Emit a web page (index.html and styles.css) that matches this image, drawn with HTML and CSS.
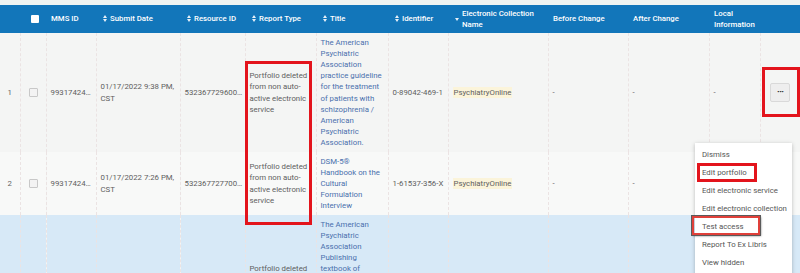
FILE: index.html
```html
<!DOCTYPE html>
<html lang="en">
  <head>
    <meta charset="UTF-8" />
    <title>Electronic Resource Reports</title>
    <link rel="stylesheet" href="styles.css">
  </head>

  <body>
    <div class="topband"></div>
    <div class="wrap">
      <table class="grid">
        <colgroup>
          <col style="width: 20px" />
          <col style="width: 26px" />
          <col style="width: 50px" />
          <col style="width: 84px" />
          <col style="width: 65px" />
          <col style="width: 71px" />
          <col style="width: 72px" />
          <col style="width: 60px" />
          <col style="width: 100px" />
          <col style="width: 80px" />
          <col style="width: 81px" />
          <col style="width: 51px" />
          <col style="width: 40px" />
        </colgroup>
        <thead>
          <tr>
            <th></th>
            <th class="center"><span class="hcheck"></span></th>
            <th><div class="th-in">MMS ID</div></th>
            <th><div class="th-in sortable"><svg class="sort" width="4" height="7" viewBox="0 0 4 7"><path d="M2 0L4 3H0zM0 4H4L2 7z" fill="currentColor"/></svg>Submit Date</div></th>
            <th><div class="th-in sortable"><svg class="sort" width="4" height="7" viewBox="0 0 4 7"><path d="M2 0L4 3H0zM0 4H4L2 7z" fill="currentColor"/></svg>Resource ID</div></th>
            <th><div class="th-in sortable"><svg class="sort" width="4" height="7" viewBox="0 0 4 7"><path d="M2 0L4 3H0zM0 4H4L2 7z" fill="currentColor"/></svg>Report Type</div></th>
            <th><div class="th-in sortable"><svg class="sort" width="4" height="7" viewBox="0 0 4 7"><path d="M2 0L4 3H0zM0 4H4L2 7z" fill="currentColor"/></svg>Title</div></th>
            <th><div class="th-in sortable"><svg class="sort" width="4" height="7" viewBox="0 0 4 7"><path d="M2 0L4 3H0zM0 4H4L2 7z" fill="currentColor"/></svg>Identifier</div></th>
            <th><div class="th-in sortable"><svg class="sort" width="4" height="3" viewBox="0 0 4 3"><path d="M0 0H4L2 3z" fill="currentColor"/></svg><span>Electronic Collection Name</span></div></th>
            <th><div class="th-in">Before Change</div></th>
            <th><div class="th-in">After Change</div></th>
            <th><div class="th-in">Local Information</div></th>
            <th></th>
          </tr>
        </thead>
        <tbody>
          <tr class="row-a">
            <td class="num">1</td>
            <td class="center"><span class="check"></span></td>
            <td class="clip">9931742430004521</td>
            <td>01/17/2022 9:38 PM, CST</td>
            <td class="clip">532367729600045</td>
            <td>Portfolio deleted from non auto-active electronic service</td>
            <td><a class="title" href="#">The American Psychiatric Association practice guideline for the treatment of patients with schizophrenia / American Psychiatric Association.</a></td>
            <td class="nowrap">0-89042-469-1</td>
            <td><span class="mark">PsychiatryOnline</span></td>
            <td>-</td>
            <td>-</td>
            <td>-</td>
            <td class="center"><button class="more">&middot;&middot;&middot;</button></td>
          </tr>
          <tr class="row-b">
            <td class="num">2</td>
            <td class="center"><span class="check"></span></td>
            <td class="clip">9931742420004521</td>
            <td>01/17/2022 7:26 PM, CST</td>
            <td class="clip">532367727700045</td>
            <td>Portfolio deleted from non auto-active electronic service</td>
            <td><a class="title" href="#">DSM-5&reg; Handbook on the Cultural Formulation Interview</a></td>
            <td class="nowrap">1-61537-356-X</td>
            <td><span class="mark">PsychiatryOnline</span></td>
            <td>-</td>
            <td>-</td>
            <td></td>
            <td></td>
          </tr>
          <tr class="row-sel">
            <td class="num">3</td>
            <td class="center"><span class="check"></span></td>
            <td class="clip">9931742410004521</td>
            <td>01/17/2022 7:26 PM, CST</td>
            <td class="clip">532367727500045</td>
            <td>Portfolio deleted from non auto-active electronic service</td>
            <td><a class="title" href="#">The American Psychiatric Association Publishing textbook of geriatric psychiatry / edited by Dan G. Blazer, David C. Steffens, Mugdha E. Thakur, sixth edition.</a></td>
            <td class="nowrap">1-61537-150-8</td>
            <td><span class="mark">PsychiatryOnline</span></td>
            <td>-</td>
            <td>-</td>
            <td>-</td>
            <td></td>
          </tr>
        </tbody>
      </table>

      <!-- annotation boxes -->
      <div class="callout callout-type"></div>
      <div class="callout callout-more"></div>

      <ul class="menu">
        <li>Dismiss</li>
        <li>Edit portfolio</li>
        <li>Edit electronic service</li>
        <li>Edit electronic collection</li>
        <li>Test access</li>
        <li>Report To Ex Libris</li>
        <li>View hidden</li>
        <li>Delete</li>
        <div class="callout callout-edit"></div>
        <div class="callout callout-test"></div>
      </ul>
    </div>
  </body>
</html>
```

FILE: styles.css
```css
body {
  margin: 0;
  background-color: #f3f5f4;
  font-family: Roboto, "Liberation Sans", sans-serif;
  font-size: 7.8px;
  line-height: 11.2px;
  color: #5e5e5e;
  overflow: hidden;
}

.topband {
  height: 5px;
  background-color: #eff4f2;
}

.wrap {
  position: relative;
}

.grid {
  width: 800px;
  table-layout: fixed;
  border-collapse: collapse;
}

.grid thead tr {
  height: 28px;
  background-color: #1276ba;
}

.grid th {
  padding: 0 2px 0 5px;
  color: #fff;
  font-weight: 500;
  text-align: left;
  vertical-align: middle;
}

.th-in {
  display: flex;
  align-items: center;
}

.th-in.sortable {
  padding-left: 2px;
}

.sort {
  flex: none;
  margin-right: 3px;
  color: #e6f0f8;
}

.hcheck {
  display: inline-block;
  width: 8px;
  height: 8px;
  border-radius: 1px;
  background-color: #fff;
  vertical-align: middle;
}

.grid td {
  padding: 3.5px 4px 3.5px 4px;
  vertical-align: middle;
  border-left: 1px dashed #ebe3e3;
}

.grid td:first-child {
  border-left: none;
}

.row-a {
  background-color: #f4f5f4;
}

.row-b {
  background-color: #f8f9f8;
}

.row-sel {
  background-color: #d7e9f7;
}

.center {
  text-align: center !important;
}

.num {
  text-align: center;
  color: #666;
}

.check {
  display: inline-block;
  width: 7px;
  height: 7px;
  border: 1px solid #c8c8c8;
  border-radius: 1px;
  background-color: #f3f3f3;
  vertical-align: middle;
}

.grid td.clip {
  padding-right: 1px;
  white-space: nowrap;
  overflow: hidden;
  text-overflow: ellipsis;
}

.nowrap {
  white-space: nowrap;
}

.title {
  color: #4a70ad;
  text-decoration: none;
}

.mark {
  padding: 1px 1px;
  background-color: #fbf4da;
}

.more {
  width: 20px;
  height: 19px;
  padding: 0;
  border: 1px solid #d9d9d9;
  border-radius: 2px;
  background-color: #eeeeee;
  color: #333;
  font-family: inherit;
  font-size: 9px;
  font-weight: bold;
  line-height: 1;
  letter-spacing: -0.5px;
}

.callout {
  position: absolute;
  border: 3px solid #e3141c;
  box-sizing: border-box;
}

.callout-type {
  left: 245px;
  top: 56px;
  width: 67px;
  height: 164px;
}

.callout-more {
  left: 762px;
  top: 62px;
  width: 38px;
  height: 50px;
}

.menu {
  position: absolute;
  left: 695px;
  top: 138px;
  width: 97px;
  margin: 0;
  padding: 3px 0 0;
  list-style: none;
  background-color: #fff;
  box-shadow: 0 1px 4px rgba(0, 0, 0, 0.25);
}

.menu li {
  height: 18px;
  padding-left: 7px;
  line-height: 18px;
  color: #555;
  white-space: nowrap;
}

.callout-edit {
  left: 2px;
  top: 20px;
  width: 60px;
  height: 19px;
}

.callout-test {
  left: -3px;
  top: 73px;
  width: 68px;
  height: 19px;
  border-width: 2px;
  border-color: #e0403a;
  box-shadow: 0 0 0 1px #5a5a5a, 1px 1px 2px rgba(0, 0, 0, 0.5);
}
```
